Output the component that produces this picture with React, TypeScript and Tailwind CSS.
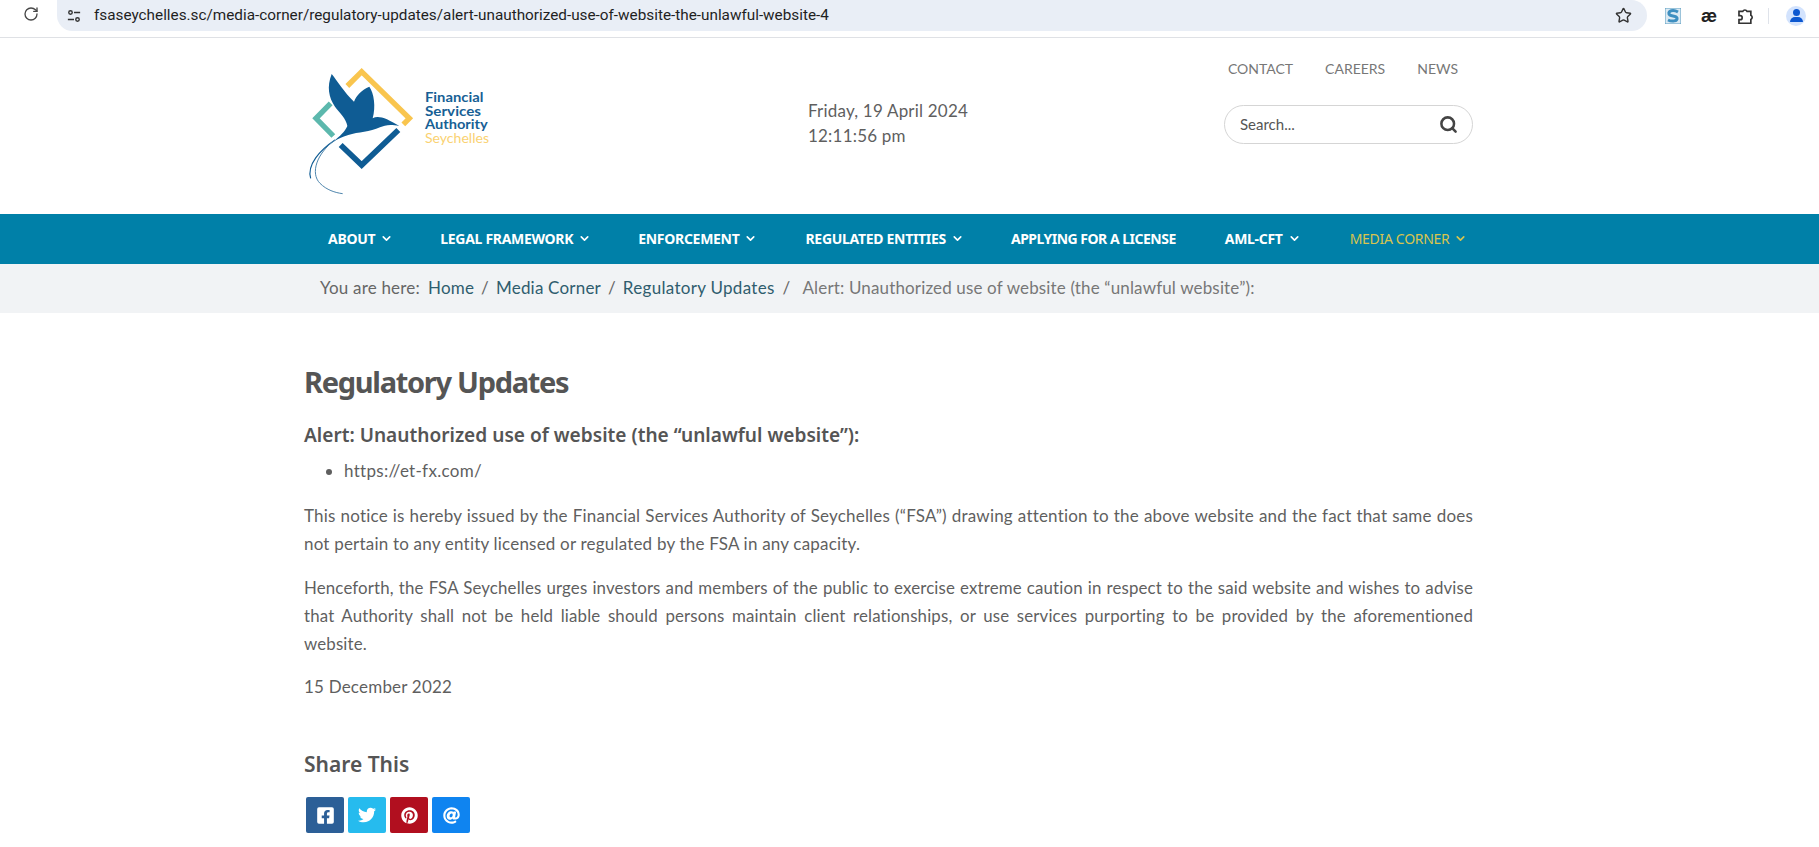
import React from 'react';
import { RotateCw, Star, Search, ChevronDown } from 'lucide-react';
import { FaFacebookSquare, FaTwitter, FaPinterest, FaAt } from 'react-icons/fa';

const navItems = [
  { label: 'ABOUT', cls: 'ml-[24px] font-bold', caret: true },
  { label: 'LEGAL FRAMEWORK', cls: 'ml-[47px] font-bold', caret: true },
  { label: 'ENFORCEMENT', cls: 'ml-[47px] font-bold', caret: true },
  { label: 'REGULATED ENTITIES', cls: 'ml-[48px] font-bold', caret: true },
  { label: 'APPLYING FOR A LICENSE', cls: 'ml-[47px] font-bold tracking-[-0.5px]', caret: false },
  { label: 'AML-CFT', cls: 'ml-[49px] font-bold', caret: true },
  { label: 'MEDIA CORNER', cls: 'ml-[49px] text-[#d8c44f] font-normal', caret: true },
];

function Logo() {
  return (
    <svg viewBox="0 0 660 480" className="w-[220px] h-[160px] -ml-[14px] -mt-[2px] shrink-0">
      <path d="M172 108 L215 65 L358 205 L340 223" fill="none" stroke="#f9c54e" strokeWidth="16" />
      <path d="M122 160 L78 205 L130 258" fill="none" stroke="#5cb8ad" strokeWidth="16" />
      <path d="M152 285 L215 345 L325 240" fill="none" stroke="#0f5c94" strokeWidth="17" />
      <path d="M125 72 C140 90 165 130 192 155 C200 135 215 120 238 110 C252 130 258 170 248 205 C265 195 290 205 328 228 C300 222 285 225 270 232 C240 246 205 246 175 255 C160 260 145 266 130 275 C150 258 165 245 172 228 C168 205 150 190 135 170 C116 142 110 110 125 72 Z" fill="#0f5c94" />
      <path d="M135 270 C90 300 50 345 62 385" fill="none" stroke="#0f5c94" strokeWidth="3.5" />
      <path d="M135 270 C80 310 60 370 90 400 C110 420 135 428 158 431" fill="none" stroke="#4f86ad" strokeWidth="3" />
      <g fontFamily="Lato, sans-serif" fontSize="40" fontWeight="700" fill="#175f95">
        <text x="405" y="156" textLength="175" lengthAdjust="spacingAndGlyphs">Financial</text>
        <text x="405" y="198" textLength="168" lengthAdjust="spacingAndGlyphs">Services</text>
        <text x="405" y="238" textLength="188" lengthAdjust="spacingAndGlyphs">Authority</text>
        <text x="405" y="280" textLength="192" lengthAdjust="spacingAndGlyphs" fill="#fad272" fontWeight="400">Seychelles</text>
      </g>
    </svg>
  );
}

function BrowserBar() {
  return (
    <div className="h-[38px] flex items-start border-b border-[#dfe1e5] bg-white">
      <RotateCw size={16} strokeWidth={2} className="ml-[23px] mt-[6px] text-[#474747]" />
      <div className="ml-[18px] w-[1590px] h-[31px] bg-[#e9eef6] rounded-r-[16px] rounded-bl-[16px] flex items-center pl-[10px] pr-[15px]">
        <svg viewBox="0 0 16 16" className="w-[14px] h-[14px] text-[#333]" fill="none" stroke="currentColor" strokeWidth="1.6">
          <circle cx="4" cy="4" r="2" />
          <path d="M8 4h7M1 12h7" />
          <circle cx="12" cy="12" r="2" />
        </svg>
        <span className="ml-[13px] text-[15.3px] text-[#1f1f1f] font-['Roboto',sans-serif] whitespace-nowrap">
          fsaseychelles.sc/media-corner/regulatory-updates/alert-unauthorized-use-of-website-the-unlawful-website-4
        </span>
        <Star size={17} strokeWidth={2} className="ml-auto text-[#333]" />
      </div>
      <div className="flex items-center h-[31px]">
        <svg viewBox="0 0 16 16" className="ml-[18px] w-[16px] h-[16px]">
          <rect width="16" height="16" fill="#dceaf3" stroke="#5b9dc1" />
          <path d="M13 4 C8 1 3 3 4 6 C5 9 11 7 12 10 C13 13 7 14 3 12" fill="none" stroke="#3f8fc0" strokeWidth="3" />
        </svg>
        <span className="ml-[20px] text-[18px] font-bold leading-none text-[#222] font-['Liberation_Sans',sans-serif]">æ</span>
        <svg viewBox="0 0 16 16" className="ml-[19px] w-[19px] h-[19px] text-[#333]" fill="none" stroke="currentColor" strokeWidth="1.4">
          <path d="M2.5 4.5h3.2a2 2 0 0 1 3.6 0h3.2v3.2a2 2 0 0 1 0 3.6v3.2H2.5v-3h1a1.6 1.6 0 0 0 0-3.4h-1z" />
        </svg>
        <div className="ml-[13px] w-px h-[16px] bg-[#dfe3ea]" />
        <div className="ml-[17px] w-[20px] h-[20px] rounded-full bg-[#d3e3fd] flex flex-col items-center justify-center">
          <div className="w-[7px] h-[7px] rounded-full bg-[#0b57d0]" />
          <div className="w-[13px] h-[5px] mt-px rounded-t-[5px] bg-[#0b57d0]" />
        </div>
      </div>
    </div>
  );
}

function Header() {
  return (
    <header className="h-[176px] w-[1169px] ml-[304px] flex">
      <div className="w-[504px] pt-[14px]">
        <Logo />
      </div>
      <div className="flex-1 pt-[60px] text-[17px] tracking-[0.2px] leading-[25px] text-[#5f5f5f]">
        <div>Friday, 19 April 2024</div>
        <div>12:11:56 pm</div>
      </div>
      <div className="w-[249px] pt-[23px]">
        <div className="flex justify-end gap-[32px] pr-[15px] text-[14px] leading-[16px] text-[#777]">
          <span>CONTACT</span>
          <span>CAREERS</span>
          <span>NEWS</span>
        </div>
        <div className="mt-[28px] h-[39px] border border-[#d5d5d5] rounded-full flex items-center pl-[15px] pr-[14px]">
          <span className="text-[15px] text-[#555]">Search...</span>
          <Search size={19} strokeWidth={3.2} className="ml-auto text-[#444]" />
        </div>
      </div>
    </header>
  );
}

export default function App() {
  return (
    <div className="h-[847px] w-full overflow-hidden bg-white font-['Lato',sans-serif]">
      <BrowserBar />
      <Header />

      <nav className="h-[50px] pb-[2px] bg-[#0080a8] pl-[304px] flex items-center text-white text-[14px] font-['Noto_Sans',sans-serif]">
        {navItems.map((item) => (
          <div key={item.label} className={`flex items-center whitespace-nowrap tracking-[-0.3px] ${item.cls}`}>
            {item.label}
            {item.caret && <ChevronDown size={13} strokeWidth={3} className="ml-[5px]" />}
          </div>
        ))}
      </nav>

      <div className="h-[49px] pb-[2px] bg-[#f1f3f5] pl-[320px] flex items-center text-[17px] tracking-[0.2px] text-[#666] whitespace-nowrap">
        <span>You are here:</span>
        <span className="ml-[8px] text-[#2f5d6e]">Home</span>
        <span className="mx-[7px]">/</span>
        <span className="text-[#2f5d6e]">Media Corner</span>
        <span className="mx-[7px]">/</span>
        <span className="text-[#2f5d6e] tracking-[0.3px]">Regulatory Updates</span>
        <span className="ml-[8px] mr-[12px]">/</span>
        <span className="text-[#777] tracking-[0.15px]">Alert: Unauthorized use of website (the “unlawful website”):</span>
      </div>

      <main className="w-[1169px] ml-[304px] pt-[49px] text-[17px] tracking-[0.2px] leading-[28px] text-[#5f5f5f]">
        <h1 className="text-[29px] leading-[40px] font-bold tracking-[-1.3px] text-[#555] font-['Noto_Sans',sans-serif]">Regulatory Updates</h1>
        <h2 className="mt-[20px] text-[19.1px] tracking-[0px] leading-[26px] font-semibold text-[#555] font-['Noto_Sans',sans-serif]">Alert: Unauthorized use of website (the “unlawful website”):</h2>
        <ul className="mt-[9px] pl-[40px] list-disc tracking-[0.3px]">
          <li>https://et-fx.com/</li>
        </ul>
        <p className="mt-[17px] text-justify">
          This notice is hereby issued by the Financial Services Authority of Seychelles (“FSA”) drawing attention to the above website and the fact that same does not pertain to any entity licensed or regulated by the FSA in any capacity.
        </p>
        <p className="mt-[16px] text-justify text-[16.85px] tracking-[0.15px]">
          Henceforth, the FSA Seychelles urges investors and members of the public to exercise extreme caution in respect to the said website and wishes to advise that Authority shall not be held liable should persons maintain client relationships, or use services purporting to be provided by the aforementioned website.
        </p>
        <p className="mt-[15px]">15 December 2022</p>
        <h3 className="mt-[49px] text-[21px] tracking-[0px] leading-[28px] font-semibold text-[#555] font-['Noto_Sans',sans-serif]">Share This</h3>
        <div className="mt-[19px] ml-[2px] flex gap-[4px] text-white">
          <a className="w-[38px] h-[36px] rounded-[2px] bg-[#2c5f97] flex items-center justify-center"><FaFacebookSquare size={19} /></a>
          <a className="w-[38px] h-[36px] rounded-[2px] bg-[#26bbee] flex items-center justify-center"><FaTwitter size={18} /></a>
          <a className="w-[38px] h-[36px] rounded-[2px] bg-[#b10f1f] flex items-center justify-center"><FaPinterest size={17} /></a>
          <a className="w-[38px] h-[36px] rounded-[2px] bg-[#0f84f0] flex items-center justify-center"><FaAt size={17} /></a>
        </div>
      </main>
    </div>
  );
}
